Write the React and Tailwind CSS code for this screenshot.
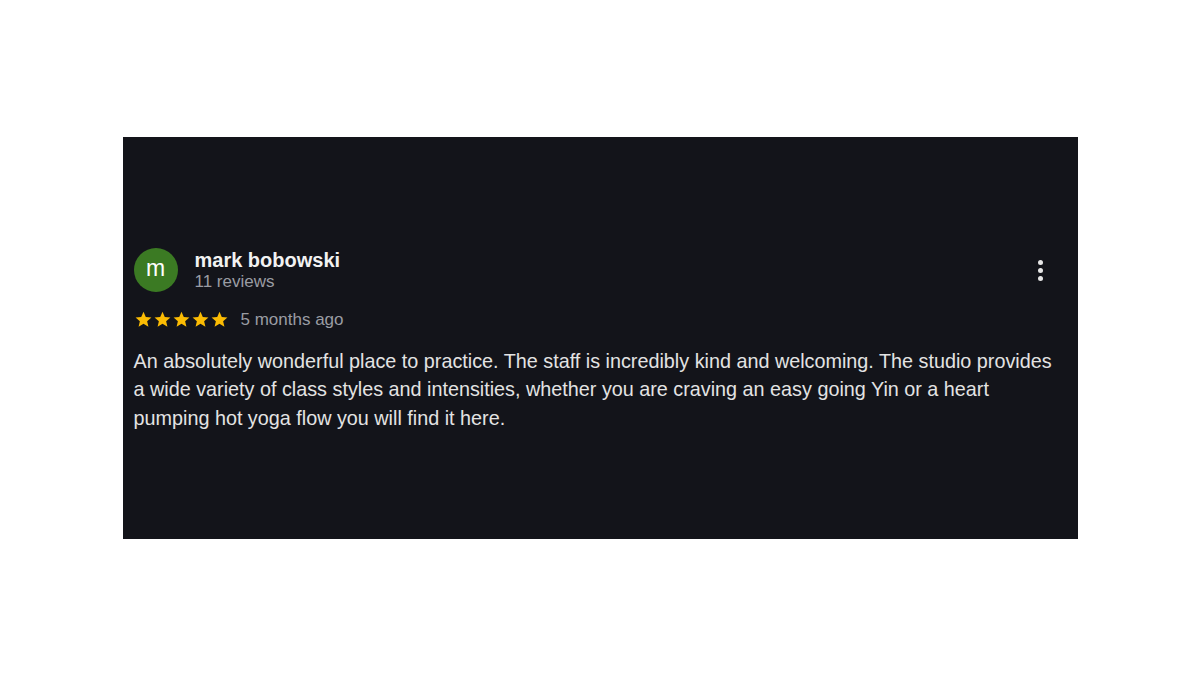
export default function App() {
  return (
    <div className="w-[1200px] h-[675px] bg-white flex items-center justify-center" style={{ fontFamily: '"Liberation Sans", Arial, sans-serif' }}>
      <div className="w-[955px] h-[402px] bg-[#13141a] px-[11px] pt-[111px]">
        <div className="w-full">
          <div className="flex items-start">
            <div className="w-[44px] h-[44px] rounded-full bg-[#3b7a23] flex items-center justify-center text-white text-[23px] leading-none pb-[3px]">
              m
            </div>
            <div className="ml-[17px] flex-1 pt-[1px]">
              <div className="text-[#f2f2f2] font-bold text-[20px] leading-[23px]">mark bobowski</div>
              <div className="text-[#9a9ca3] text-[17px] leading-[20px]">11 reviews</div>
            </div>
            <button className="mt-[12px] mr-[19px] w-[14px] flex flex-col items-center gap-[3px]">
              <span className="w-[5px] h-[5px] rounded-full bg-[#e6e6e6]" />
              <span className="w-[5px] h-[5px] rounded-full bg-[#e6e6e6]" />
              <span className="w-[5px] h-[5px] rounded-full bg-[#e6e6e6]" />
            </button>
          </div>
          <div className="flex items-center mt-[18px]">
            <div className="flex">
              {[0, 1, 2, 3, 4].map((i) => (
                <svg key={i} width="19" height="19" viewBox="0 0 24 24">
                  <path
                    fill="#fbbc04"
                    d="M12 2.2l2.9 6.6 7.1.6-5.4 4.7 1.6 7-6.2-3.7-6.2 3.7 1.6-7L2 9.4l7.1-.6z"
                  />
                </svg>
              ))}
            </div>
            <span className="ml-[12px] text-[#9a9ca3] text-[17px] leading-[20px]">5 months ago</span>
          </div>
          <p className="mt-[17px] pr-[10px] text-[#e3e3e3] text-[19.8px] leading-[28.5px]">
            An absolutely wonderful place to practice. The staff is incredibly kind and welcoming. The studio provides a wide variety of class styles and intensities, whether you are craving an easy going Yin or a heart pumping hot yoga flow you will find it here.
          </p>
        </div>
      </div>
    </div>
  );
}
